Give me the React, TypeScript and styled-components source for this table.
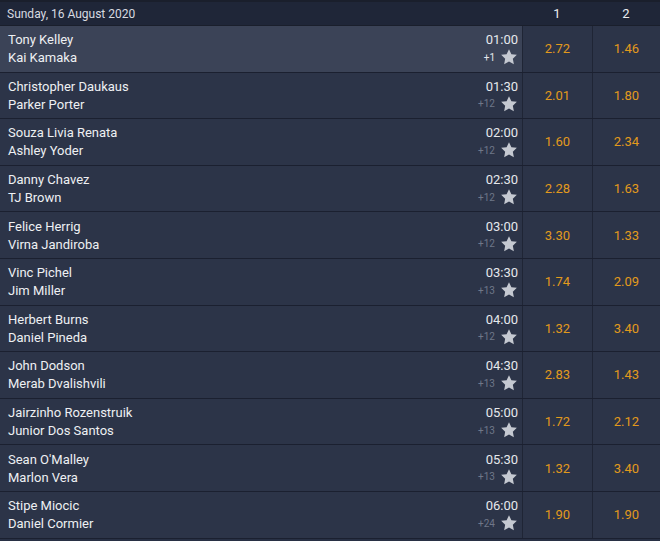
import React from "react";
import styled, { createGlobalStyle } from "styled-components";

const Global = createGlobalStyle`
  html, body { margin: 0; padding: 0; background: #283044; }
  body { font-family: Roboto, "Noto Sans", Arial, sans-serif; }
`;

type Match = { a: string; b: string; time: string; more: string; o1: string; o2: string };

const matches: Match[] = [
  { a: "Tony Kelley", b: "Kai Kamaka", time: "01:00", more: "+1", o1: "2.72", o2: "1.46" },
  { a: "Christopher Daukaus", b: "Parker Porter", time: "01:30", more: "+12", o1: "2.01", o2: "1.80" },
  { a: "Souza Livia Renata", b: "Ashley Yoder", time: "02:00", more: "+12", o1: "1.60", o2: "2.34" },
  { a: "Danny Chavez", b: "TJ Brown", time: "02:30", more: "+12", o1: "2.28", o2: "1.63" },
  { a: "Felice Herrig", b: "Virna Jandiroba", time: "03:00", more: "+12", o1: "3.30", o2: "1.33" },
  { a: "Vinc Pichel", b: "Jim Miller", time: "03:30", more: "+13", o1: "1.74", o2: "2.09" },
  { a: "Herbert Burns", b: "Daniel Pineda", time: "04:00", more: "+12", o1: "1.32", o2: "3.40" },
  { a: "John Dodson", b: "Merab Dvalishvili", time: "04:30", more: "+13", o1: "2.83", o2: "1.43" },
  { a: "Jairzinho Rozenstruik", b: "Junior Dos Santos", time: "05:00", more: "+13", o1: "1.72", o2: "2.12" },
  { a: "Sean O'Malley", b: "Marlon Vera", time: "05:30", more: "+13", o1: "1.32", o2: "3.40" },
  { a: "Stipe Miocic", b: "Daniel Cormier", time: "06:00", more: "+24", o1: "1.90", o2: "1.90" },
];

const Table = styled.div`
  width: 660px;
  border-top: 2px solid #1a1f2c;
  background: #2c3448;
`;

const Grid = styled.div`
  display: grid;
  grid-template-columns: 522px 70px 68px;
`;

const HeaderRow = styled(Grid)`
  height: 23px;
  background: #1f2638;
  border-bottom: 1px solid #1a1f2c;
  color: #e4e6ea;
  font-size: 12px;
  align-items: center;
`;

const HeaderDate = styled.div`
  padding-left: 7px;
  color: #d7dae0;
`;

const HeaderCol = styled.div`
  text-align: center;
  font-size: 13px;
  color: #eceef1;
`;

const Row = styled(Grid)`
  height: 45.6px;
  border-bottom: 1px solid #1b2030;
`;

const Main = styled.div<{ $active?: boolean }>`
  display: flex;
  justify-content: space-between;
  align-items: center;
  padding: 0 4px 0 8px;
  background: ${(p) => (p.$active ? "#3b4357" : "#2c3448")};
`;

const Names = styled.div`
  display: flex;
  flex-direction: column;
  gap: 1px;
  color: #eef0f3;
  font-size: 13px;
  line-height: 17px;
`;

const Info = styled.div`
  display: flex;
  flex-direction: column;
  align-items: flex-end;
  gap: 0px;
`;

const Time = styled.div`
  color: #e6e8ec;
  font-size: 13px;
  line-height: 17px;
`;

const InfoBottom = styled.div`
  display: flex;
  align-items: center;
  gap: 5px;
  height: 18px;
`;

const More = styled.span<{ $bright?: boolean }>`
  font-size: 10px;
  color: ${(p) => (p.$bright ? "#e6e8ec" : "#6f7789")};
`;

const Odd = styled.div`
  display: flex;
  align-items: center;
  justify-content: center;
  color: #e29a1c;
  font-size: 13px;
  border-left: 1px solid #1f2535;
  background: #2c3448;
`;

const Star = () => (
  <svg width="18" height="18" viewBox="0 0 24 24" aria-hidden>
    <path
      d="M12 1.5l3.2 6.7 7.3.9-5.4 5.1 1.4 7.3L12 18l-6.5 3.5 1.4-7.3-5.4-5.1 7.3-.9z"
      fill="#c5c9d1"
    />
  </svg>
);

export default function App() {
  return (
    <>
      <Global />
      <Table>
        <HeaderRow>
          <HeaderDate>Sunday, 16 August 2020</HeaderDate>
          <HeaderCol>1</HeaderCol>
          <HeaderCol>2</HeaderCol>
        </HeaderRow>
        {matches.map((m, i) => (
          <Row key={i}>
            <Main $active={i === 0}>
              <Names>
                <span>{m.a}</span>
                <span>{m.b}</span>
              </Names>
              <Info>
                <Time>{m.time}</Time>
                <InfoBottom>
                  <More $bright={i === 0}>{m.more}</More>
                  <Star />
                </InfoBottom>
              </Info>
            </Main>
            <Odd>{m.o1}</Odd>
            <Odd>{m.o2}</Odd>
          </Row>
        ))}
      </Table>
    </>
  );
}
